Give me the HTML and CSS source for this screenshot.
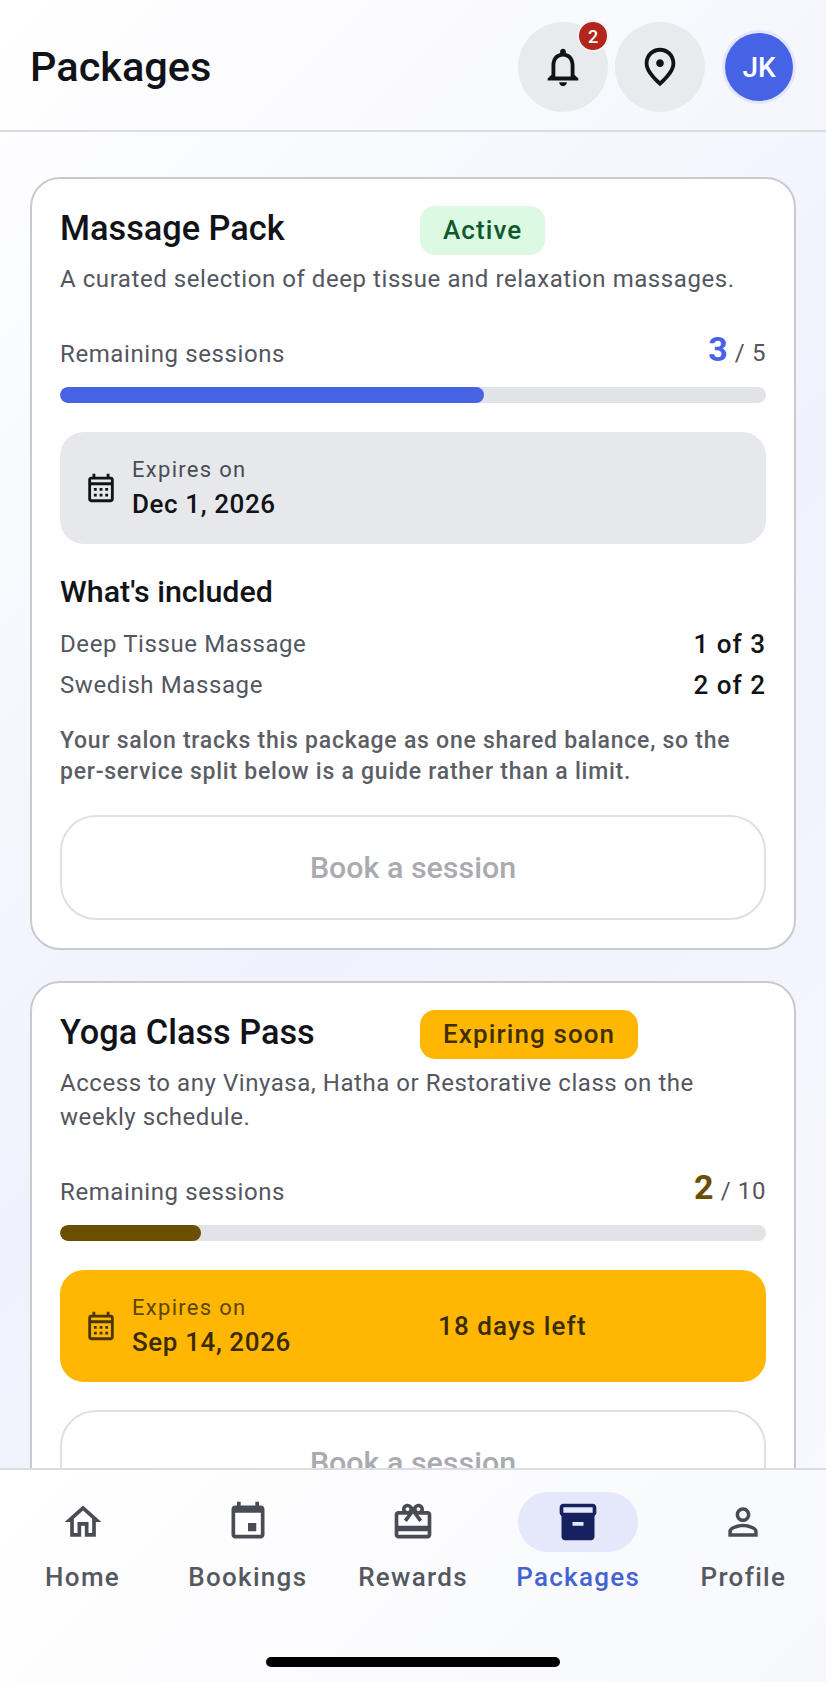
FILE: index.html
```html
<!doctype html>
<html lang="en">
<head>
<meta charset="utf-8">
<meta name="viewport" content="width=device-width, initial-scale=1">
<title>Packages</title>
<link rel="stylesheet" href="styles.css">
</head>
<body>
<div class="app">

	<header class="topBar">
		<h1 class="pageTitle">Packages</h1>
		<div class="topActions">
			<div class="roundBtn">
				<svg class="topIcon" viewBox="0 0 24 24"><path d="M12 22c1.1 0 2-.9 2-2h-4c0 1.1.9 2 2 2zm6-6v-5c0-3.07-1.63-5.64-4.5-6.32V4c0-.83-.67-1.5-1.5-1.5s-1.5.67-1.5 1.5v.68C7.64 5.36 6 7.92 6 11v5l-2 2v1h16v-1l-2-2zm-2 1H8v-6c0-2.48 1.51-4.5 4-4.5s4 2.02 4 4.5v6z"/></svg>
				<span class="badge">2</span>
			</div>
			<div class="roundBtn">
				<svg class="topIcon" viewBox="0 0 24 24"><path d="M12 12c-1.1 0-2-.9-2-2s.9-2 2-2 2 .9 2 2-.9 2-2 2zm6-1.8C18 6.57 15.35 4 12 4s-6 2.57-6 6.2c0 2.34 1.95 5.44 6 9.14 4.05-3.7 6-6.8 6-9.14zM12 2c4.2 0 8 3.22 8 8.2 0 3.32-2.67 7.25-8 11.8-5.33-4.55-8-8.48-8-11.8C4 5.22 7.8 2 12 2z"/></svg>
			</div>
			<div class="avatar">JK</div>
		</div>
	</header>

	<main class="content">

		<section class="card">
			<div class="cardHead">
				<h2 class="cardTitle">Massage Pack</h2>
				<div><span class="pill pillActive">Active</span></div>
			</div>
			<p class="cardDesc">A curated selection of deep tissue and relaxation massages.</p>
			<div class="remainRow">
				<span class="remainLabel">Remaining sessions</span>
				<span class="remainCount"><b class="countBlue">3</b> / 5</span>
			</div>
			<div class="track"><div class="fill fillBlue" style="width: 60%"></div></div>
			<div class="expiry">
				<svg class="calIcon" viewBox="0 0 24 24"><path d="M19 4h-1V2h-2v2H8V2H6v2H5c-1.1 0-2 .9-2 2v14c0 1.1.9 2 2 2h14c1.1 0 2-.9 2-2V6c0-1.1-.9-2-2-2zm0 16H5V10h14v10zm0-12H5V6h14v2zM9 14H7v-2h2v2zm4 0h-2v-2h2v2zm4 0h-2v-2h2v2zm-8 4H7v-2h2v2zm4 0h-2v-2h2v2zm4 0h-2v-2h2v2z"/></svg>
				<div class="expiryText">
					<span class="expiryLabel">Expires on</span>
					<span class="expiryDate">Dec 1, 2026</span>
				</div>
			</div>
			<h3 class="incTitle">What's included</h3>
			<div class="incList">
				<div class="incRow"><span>Deep Tissue Massage</span><b>1 of 3</b></div>
				<div class="incRow"><span>Swedish Massage</span><b>2 of 2</b></div>
			</div>
			<p class="incNote">Your salon tracks this package as one shared balance, so the per-service split below is a guide rather than a limit.</p>
			<div class="bookBtn">Book a session</div>
		</section>

		<section class="card">
			<div class="cardHead">
				<h2 class="cardTitle">Yoga Class Pass</h2>
				<div><span class="pill pillSoon">Expiring soon</span></div>
			</div>
			<p class="cardDesc">Access to any Vinyasa, Hatha or Restorative class on the weekly schedule.</p>
			<div class="remainRow">
				<span class="remainLabel">Remaining sessions</span>
				<span class="remainCount"><b class="countAmber">2</b> / 10</span>
			</div>
			<div class="track"><div class="fill fillAmber" style="width: 20%"></div></div>
			<div class="expiry expirySoon">
				<svg class="calIcon" viewBox="0 0 24 24"><path d="M19 4h-1V2h-2v2H8V2H6v2H5c-1.1 0-2 .9-2 2v14c0 1.1.9 2 2 2h14c1.1 0 2-.9 2-2V6c0-1.1-.9-2-2-2zm0 16H5V10h14v10zm0-12H5V6h14v2zM9 14H7v-2h2v2zm4 0h-2v-2h2v2zm4 0h-2v-2h2v2zm-8 4H7v-2h2v2zm4 0h-2v-2h2v2zm4 0h-2v-2h2v2z"/></svg>
				<div class="expiryText expiryTextWide">
					<span class="expiryLabel">Expires on</span>
					<span class="expiryDate">Sep 14, 2026</span>
				</div>
				<span class="daysLeft">18 days left</span>
			</div>
			<div class="bookBtn">Book a session</div>
		</section>

	</main>

	<nav class="bottomNav">
		<div class="navItems">
			<div class="navItem">
				<div class="navIconWrap"><svg class="navIcon" viewBox="0 0 24 24"><path d="M12 5.69l5 4.5V18h-2v-6H9v6H7v-7.81l5-4.5M12 3L2 12h3v8h6v-6h2v6h6v-8h3L12 3z"/></svg></div>
				<span>Home</span>
			</div>
			<div class="navItem">
				<div class="navIconWrap"><svg class="navIcon" viewBox="0 0 24 24"><path d="M16.5 12.5H12V17h4.500zM16 1v2H8V1H6v2H5c-1.11 0-1.99.9-1.990 2L3 19c0 1.100.89 2 2 2h14c1.100 0 2-.9 2-2V5c0-1.100-.9-2-2-2h-1V1h-2zm3 18H5V7h14v12z"/></svg></div>
				<span>Bookings</span>
			</div>
			<div class="navItem">
				<div class="navIconWrap"><svg class="navIcon" viewBox="0 0 24 24"><path d="M20 6h-2.18c.11-.31.18-.65.18-1 0-1.66-1.34-3-3-3-1.05 0-1.96.54-2.5 1.35l-.5.67-.5-.68C10.96 2.54 10.05 2 9 2 7.34 2 6 3.34 6 5c0 .35.07.69.18 1H4c-1.11 0-1.99.89-1.99 2L2 19c0 1.11.89 2 2 2h16c1.11 0 2-.89 2-2V8c0-1.11-.89-2-2-2zm-5-2c.55 0 1 .45 1 1s-.45 1-1 1-1-.45-1-1 .45-1 1-1zM9 4c.55 0 1 .45 1 1s-.45 1-1 1-1-.45-1-1 .45-1 1-1zm11 15H4v-2h16v2zm0-5H4V8h5.08L7 10.83 8.62 12 11 8.76l1-1.36 1 1.36L15.38 12 17 10.83 14.92 8H20v6z"/></svg></div>
				<span>Rewards</span>
			</div>
			<div class="navItem navItemOn">
				<div class="navIconWrap"><svg class="navIcon" viewBox="0 0 24 24"><path d="M20 2H4c-1 0-2 .9-2 2v3.01c0 .72.43 1.34 1 1.69V20c0 1.1 1.1 2 2 2h14c.9 0 2-.9 2-2V8.7c.57-.35 1-.97 1-1.69V4c0-1.1-1-2-2-2zm-5 12H9v-2h6v2zm5-7H4V4l16-.02V7z"/></svg></div>
				<span>Packages</span>
			</div>
			<div class="navItem">
				<div class="navIconWrap"><svg class="navIcon" viewBox="0 0 24 24"><path d="M12 5.9c1.16 0 2.1.94 2.1 2.1s-.94 2.1-2.1 2.1S9.9 9.16 9.9 8s.94-2.1 2.1-2.1m0 9c2.97 0 6.1 1.46 6.1 2.1v1.1H5.9V17c0-.64 3.13-2.1 6.1-2.1M12 4C9.79 4 8 5.79 8 8s1.79 4 4 4 4-1.79 4-4-1.79-4-4-4zm0 9c-2.67 0-8 1.34-8 4v3h16v-3c0-2.66-5.33-4-8-4z"/></svg></div>
				<span>Profile</span>
			</div>
		</div>
		<div class="homeBar"></div>
	</nav>

</div>
</body>
</html>
```

FILE: styles.css
```css
* { box-sizing: border-box; }
html, body { height: 100%; margin: 0; }
body { color: #111318; font-family: Roboto, "Liberation Sans", sans-serif; overflow: hidden; }
h1, h2, h3, p { margin: 0; }

.app { background: linear-gradient(135deg, #ffffff 0%, #eff2fc 50%, #f9fafe 100%); display: flex; flex-direction: column; height: 1682px; width: 826px; }

/* top bar */
.topBar { align-items: center; background: linear-gradient(135deg, #ffffff 0%, #f5f6fd 100%); border-bottom: 2px solid #dcdde2; display: flex; flex: none; height: 132px; justify-content: space-between; padding: 5px 33px 1px 30px; }
.pageTitle { font-size: 41.5px; font-weight: 500; line-height: 48px; }
.topActions { align-items: center; display: flex; gap: 7px; }
.roundBtn { align-items: center; background: #e9eaed; border-radius: 50%; display: flex; height: 90px; justify-content: center; position: relative; width: 90px; }
.topIcon { fill: #111318; height: 46px; width: 46px; }
.badge { align-items: center; background: #b3261e; border: 2px solid #f2f3f8; border-radius: 50%; color: #fff; display: flex; font-size: 18px; font-weight: 500; height: 32px; justify-content: center; position: absolute; right: -1px; top: -2px; width: 32px; }
.avatar { align-items: center; background: #4563e4; border-radius: 50%; box-shadow: 0 0 0 3px #e3e7fa; color: #fff; display: flex; font-size: 28px; font-weight: 500; height: 68px; justify-content: center; margin-left: 13px; width: 68px; }

/* scrolling part */
.content { display: flex; flex: 1; flex-direction: column; gap: 31px; min-height: 0; overflow: hidden; padding: 45px 30px 0 30px; }
.card { background: #fff; border: 2px solid #c9cad0; border-radius: 30px; flex: none; padding: 27px 28px 28px; }
.cardHead { align-items: start; display: grid; gap: 14px; grid-template-columns: 1fr 1fr; }
.cardTitle { font-size: 34.3px; font-weight: 500; line-height: 42px; margin-top: 1px; }
.pill { border-radius: 15px; display: block; font-size: 26px; font-weight: 500; letter-spacing: 1.1px; line-height: 49px; padding: 0 23px; width: fit-content; }
.pillActive { background: #dcf9e3; color: #0f5a2a; }
.pillSoon { background: #ffb703; color: #3f2e00; }
.cardDesc { color: #54565f; font-size: 24px; letter-spacing: .56px; line-height: 34px; margin-top: 7px; }

.remainRow { align-items: flex-end; display: flex; justify-content: space-between; margin-top: 33px; }
.remainLabel { color: #54565f; font-size: 24px; letter-spacing: .6px; line-height: 34px; padding-bottom: 2px; }
.remainCount { color: #54565f; font-size: 24px; letter-spacing: .6px; line-height: 40px; }
.remainCount b { font-size: 34px; font-weight: 700; }
.countBlue { color: #4563e4; }
.countAmber { color: #6b4e00; }
.track { background: #e2e3e6; border-radius: 8px; height: 16px; margin-top: 14px; overflow: hidden; }
.fill { border-radius: 8px; height: 100%; }
.fillBlue { background: #4563e4; }
.fillAmber { background: #6b4e00; }

.expiry { align-items: center; background: #e7e8ec; border-radius: 24px; display: flex; gap: 14px; height: 112px; margin-top: 29px; padding: 0 24px; }
.calIcon { fill: #111318; flex: none; height: 34px; width: 34px; }
.expiryText { display: flex; flex-direction: column; }
.expiryTextWide { width: 292px; }
.expiryLabel { color: #4a4c55; font-size: 22px; letter-spacing: 1.3px; line-height: 32px; }
.expiryDate { font-size: 26px; font-weight: 500; letter-spacing: .6px; line-height: 36px; }
.expirySoon { background: #ffb703; }
.expirySoon .calIcon { fill: #4a3600; }
.expirySoon .expiryLabel { color: #5e4500; }
.expirySoon .expiryDate { color: #3b2b00; }
.daysLeft { color: #3b2b00; font-size: 26px; font-weight: 500; letter-spacing: 1.1px; }

.incTitle { font-size: 30.4px; font-weight: 500; line-height: 38px; margin-top: 29px; }
.incList { margin-top: 13px; }
.incRow { align-items: center; color: #54565f; display: flex; font-size: 24px; justify-content: space-between; letter-spacing: .6px; line-height: 41px; }
.incRow b { color: #111318; font-size: 26px; font-weight: 500; letter-spacing: 1px; }
.incNote { color: #5c5e66; font-size: 23px; font-weight: 500; letter-spacing: .75px; line-height: 31px; margin-top: 19px; }
.bookBtn { align-items: center; border: 2px solid #dfe0e4; border-radius: 36px; color: #aaabaf; display: flex; font-size: 30.4px; font-weight: 500; height: 105px; justify-content: center; margin-top: 28px; }

/* bottom navigation */
.bottomNav { background: linear-gradient(135deg, #ffffff 0%, #f7f8fc 100%); border-top: 2px solid #dcdde2; flex: none; height: 214px; position: relative; }
.navItems { display: grid; grid-template-columns: repeat(5, 1fr); padding: 22px 0 0; }
.navItem { align-items: center; color: #56585f; display: flex; flex-direction: column; font-size: 26px; font-weight: 500; letter-spacing: 1.3px; }
.navIconWrap { align-items: center; border-radius: 30px; display: flex; height: 60px; justify-content: center; margin-bottom: 10px; width: 120px; }
.navIcon { fill: #4a4c55; height: 44px; width: 44px; }
.navItemOn { color: #4563d0; }
.navItemOn .navIconWrap { background: #e5e8fb; }
.navItemOn .navIcon { fill: #16225f; }
.homeBar { background: #000; border-radius: 5px; bottom: 15px; height: 10px; left: 266px; position: absolute; width: 294px; }
```
